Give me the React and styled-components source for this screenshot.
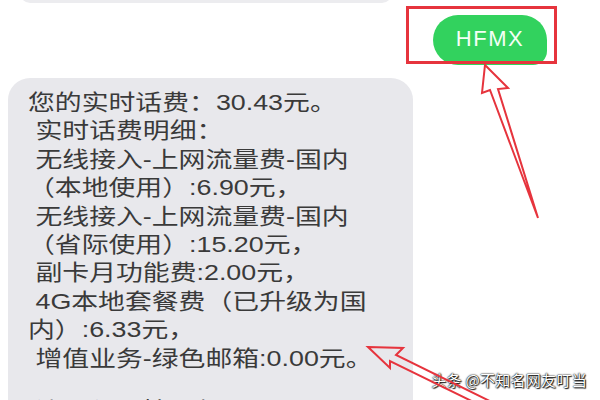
import styled, { createGlobalStyle } from "styled-components";

const GlobalStyle = createGlobalStyle`
    html, body {
        margin: 0;
        padding: 0;
        background: #ffffff;
    }
`;

const Screen = styled.div`
    position: relative;
    width: 600px;
    height: 400px;
    overflow: hidden;
    background: #ffffff;
    font-family: "Liberation Sans", "Noto Sans CJK SC", sans-serif;
`;

const PrevBubble = styled.div`
    width: 372px;
    height: 20px;
    margin: -17px 0 0 20px;
    background: #ececef;
    border-radius: 20px;
`;

const OutRow = styled.div`
    display: flex;
    justify-content: flex-end;
    padding-right: 53px;
    margin-top: 12px;
`;

const GreenBubble = styled.div`
    width: 114px;
    height: 50px;
    border-radius: 25px 25px 14px 25px;
    background: #32d25e;
    color: #f4fff6;
    font-size: 22px;
    letter-spacing: 1.5px;
    display: flex;
    align-items: center;
    justify-content: center;
    padding-bottom: 2px;
    box-sizing: border-box;
`;

const InBubble = styled.div`
    width: 405px;
    min-height: 400px;
    margin: 13px 0 0 8px;
    padding: 11px 0 0 20px;
    box-sizing: border-box;
    background: #e8e8ec;
    border-radius: 22px 22px 0 0;
`;

const TextBlock = styled.div`
    color: #3a3a3a;
    font-size: 22px;
    line-height: 28.4px;
    white-space: pre;
    transform: scaleX(1.22);
    transform-origin: left top;
`;

const Line = styled.div`
    margin-top: ${(p) => p.$gap || 0}px;
`;

const Watermark = styled.div`
    position: absolute;
    right: 13px;
    bottom: 10px;
    color: #ffffff;
    font-family: "Noto Sans CJK SC", sans-serif;
    font-size: 15px;
    letter-spacing: 0.3px;
    text-shadow: 0 0 2px #000, 0 0 1px #000, 1px 1px 1px #222;
`;

const Marks = styled.svg`
    position: absolute;
    left: 0;
    top: 0;
    pointer-events: none;
`;

const lines = [
    "您的实时话费：30.43元。",
    " 实时话费明细：",
    " 无线接入-上网流量费-国内",
    "（本地使用）:6.90元，",
    " 无线接入-上网流量费-国内",
    "（省际使用）:15.20元，",
    " 副卡月功能费:2.00元，",
    " 4G本地套餐费（已升级为国",
    "内）:6.33元，",
    " 增值业务-绿色邮箱:0.00元。",
];

export default function App() {
    return (
        <>
            <GlobalStyle />
            <Screen>
                <PrevBubble />
                <OutRow>
                    <GreenBubble>HFMX</GreenBubble>
                </OutRow>
                <InBubble>
                    <TextBlock>
                        {lines.map((text, i) => (
                            <Line key={i}>{text}</Line>
                        ))}
                        <Line $gap={24}> 流量使用情况如下：</Line>
                    </TextBlock>
                </InBubble>
                <Watermark>头条 @不知名网友叮当</Watermark>
                <Marks width="600" height="400" viewBox="0 0 600 400">
                    <rect x="407.5" y="7.5" width="148" height="55" fill="none" stroke="#e6343d" strokeWidth="3" />
                    <polygon
                        points="485,65 508,88 498,89 538,218 490,90 482,93"
                        fill="none"
                        stroke="#e6343d"
                        strokeWidth="2"
                        strokeLinejoin="miter"
                    />
                    <polygon
                        points="368,347 403,348 396,355 508,410 494,412 390,361 390,368"
                        fill="none"
                        stroke="#e6343d"
                        strokeWidth="2"
                        strokeLinejoin="miter"
                    />
                </Marks>
            </Screen>
        </>
    );
}
